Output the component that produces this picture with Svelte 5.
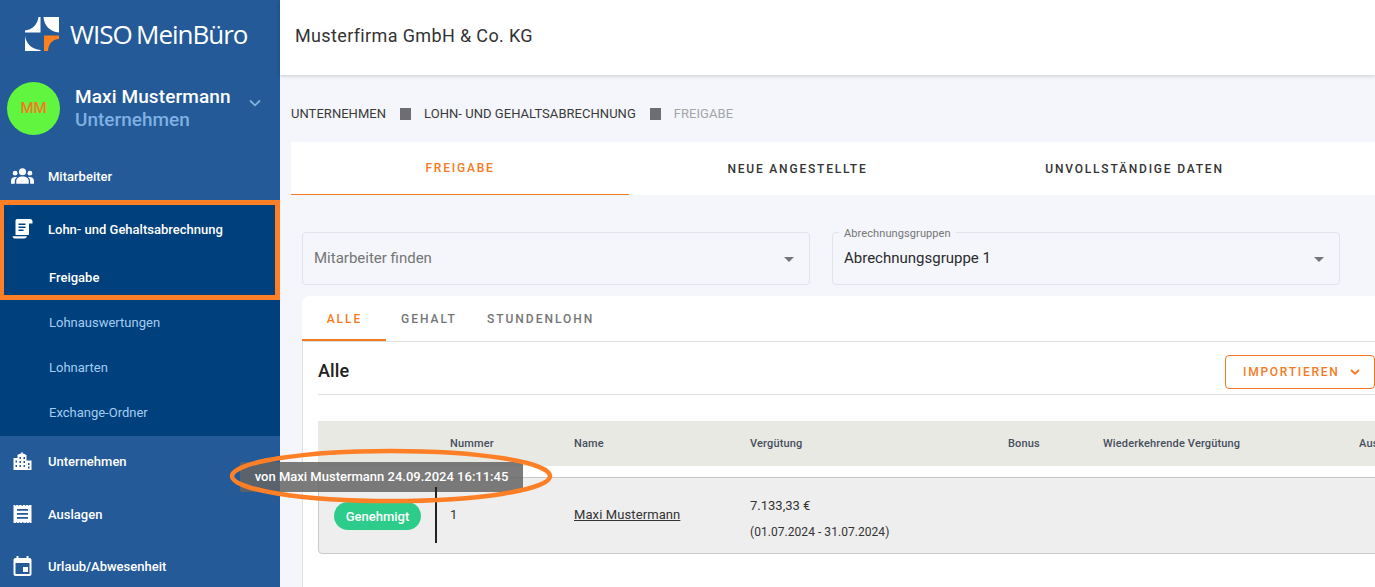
<script>
  const subItems = ['Lohnauswertungen', 'Lohnarten', 'Exchange-Ordner'];
  const mainTabs = ['Freigabe', 'Neue Angestellte', 'Unvollständige Daten'];
  const subTabs = ['Alle', 'Gehalt', 'Stundenlohn'];
</script>

<div class="app">
  <aside class="sidebar">
    <div class="brand">
      <svg class="logo" viewBox="0 0 34 34" width="34" height="34" aria-hidden="true">
        <path fill="#fff" d="M0 13.500C7 13 12.500 7.500 13.500 0H15.500V15.500H0Z" />
        <path fill="#fff" d="M18.500 0H34V15.500C25 15 19 8.500 18.500 0Z" />
        <path fill="#fff" d="M0 18.500C.5 26 7 32.500 15.500 33V34H0Z" />
        <path fill="#ff7f1e" d="M19 18.500H34V22C27 22.500 23.500 27 23 34H19Z" />
      </svg>
      <span class="brand-name">WISO MeinBüro</span>
    </div>

    <div class="profile">
      <div class="avatar">MM</div>
      <div class="who">
        <div class="who-name">Maxi Mustermann</div>
        <div class="who-role">Unternehmen</div>
      </div>
      <svg class="who-chev" viewBox="0 0 12 8" width="12" height="8" aria-hidden="true"><path d="M1 1.500 6 6.300 11 1.500" fill="none" stroke="currentColor" stroke-width="1.800" /></svg>
    </div>

    <nav>
      <div class="item">
        <svg class="ico" viewBox="0 0 24 18" aria-hidden="true"><circle cx="12" cy="4.500" r="3.700" /><circle cx="4.300" cy="6" r="2.500" /><circle cx="19.700" cy="6" r="2.500" /><path d="M5.500 17v-2.500C5.500 11 8 9.500 12 9.500s6.500 1.500 6.500 5V17Z" /><path d="M0 17v-3c0-2.500 1.800-4 4.500-4 .7 0 1.300.1 1.800.3C4.800 11.300 4 12.800 4 14.500V17ZM24 17v-3c0-2.500-1.800-4-4.500-4-.7 0-1.300.1-1.800.3 1.500 1 2.300 2.500 2.300 4.200V17Z" /></svg>
        <span>Mitarbeiter</span>
      </div>

      <div class="group">
        <div class="item nudge">
          <svg class="ico" viewBox="0 0 20 20" aria-hidden="true"><path fill-rule="evenodd" d="M4.500 0H17.500C19 0 20 1 20 2.500V4.500H16.500V14.500C16.500 15.500 16 16 15.500 16H3V2C3 .8 3.600 0 4.500 0ZM6 4.500V6H13V4.500ZM6 7.500V9H13V7.500ZM6 10.500V12H11V10.500Z" /><path d="M0 17.300H14.500C14 18.800 13 19.500 11.500 19.500H2C1 19.500 .2 18.500 0 17.300Z" /></svg>
          <span>Lohn- und Gehaltsabrechnung</span>
        </div>
        <div class="sub current">Freigabe</div>
        {#each subItems as s}
          <div class="sub">{s}</div>
        {/each}
      </div>

      <div class="item">
        <svg class="ico" viewBox="-1 -1 20 20" aria-hidden="true"><path fill-rule="evenodd" d="M8 0h1v1.200L13 3v5.500h5V18H0V6h4V2.800L8 1.200ZM6 5v2h1.500V5ZM10 5v2h1.500V5ZM2 8.500v2h1.500v-2ZM6 9v2h1.500V9ZM10 9v2h1.500V9ZM14.500 11v2H16v-2ZM2 13v2h1.500v-2ZM6 13v2h1.500v-2ZM10 13v2h1.500v-2ZM14.500 14.500v2H16v-2Z" /></svg>
        <span>Unternehmen</span>
      </div>
      <div class="item nudge">
        <svg class="ico" viewBox="-1 -1 20 20" aria-hidden="true"><path fill-rule="evenodd" d="M0 0h1.500l.75 1 .75-1h1.500l.75 1 .75-1h1.500L9 1l.75-1h1.500l.75 1 .75-1h1.500l.75 1 .75-1H18v18h-1.500l-.75-1-.75 1h-1.500l-.75-1-.75 1h-1.500L9 17l-.75 1h-1.500L6 17l-.75 1h-1.500L3 17l-.75 1H0ZM3.500 4v1.800h11V4ZM3.500 8v1.800h11V8ZM3.500 12v1.800h11V12Z" /></svg>
        <span>Auslagen</span>
      </div>
      <div class="item">
        <svg class="ico" viewBox="0 0 18 20" aria-hidden="true"><path fill-rule="evenodd" d="M3 0h2v2h8V0h2v2h1c1.100 0 2 .9 2 2v14c0 1.100-.9 2-2 2H2c-1.100 0-2-.9-2-2V4c0-1.100.9-2 2-2h1ZM2 7v11h14V7ZM9.500 11h5v5h-5Z" /></svg>
        <span>Urlaub/Abwesenheit</span>
      </div>
    </nav>
  </aside>

  <main class="main">
    <header class="topbar">Musterfirma GmbH &amp; Co. KG</header>

    <div class="crumbs">
      <span>Unternehmen</span><i></i>
      <span>Lohn- und Gehaltsabrechnung</span><i></i>
      <span class="muted">Freigabe</span>
    </div>

    <div class="main-tabs">
      {#each mainTabs as t, i}
        <div class="main-tab" class:on={i === 0}>{t}</div>
      {/each}
    </div>

    <div class="filters">
      <div class="field">
        <span class="placeholder">Mitarbeiter finden</span>
        <b class="caret"></b>
      </div>
      <div class="field">
        <span class="legend">Abrechnungsgruppen</span>
        <span class="value">Abrechnungsgruppe 1</span>
        <b class="caret"></b>
      </div>
    </div>

    <section class="card">
      <div class="sub-tabs">
        {#each subTabs as t, i}
          <div class="sub-tab" class:on={i === 0}>{t}</div>
        {/each}
      </div>

      <div class="panel">
        <div class="panel-head">
          <h2>Alle</h2>
          <button type="button" class="import">
            Importieren
            <svg viewBox="0 0 10 6" width="10" height="6" aria-hidden="true"><path d="M1 1 5 4.700 9 1" fill="none" stroke="currentColor" stroke-width="1.800" /></svg>
          </button>
        </div>

        <div class="grid thead">
          <span></span><span>Nummer</span><span>Name</span><span>Vergütung</span><span>Bonus</span><span>Wiederkehrende Vergütung</span><span>Auslagen</span>
        </div>

        <div class="grid row">
          <span class="status"><span class="chip">Genehmigt</span></span>
          <span>1</span>
          <span class="link">Maxi Mustermann</span>
          <span class="pay">
            <span>7.133,33 €</span>
            <small>(01.07.2024 - 31.07.2024)</small>
          </span>
        </div>
      </div>
    </section>
  </main>

  <div class="tooltip">von Maxi Mustermann 24.09.2024 16:11:45</div>
  <div class="note-line"></div>
  <div class="note-box"></div>
  <svg class="note-ellipse" width="330" height="60" viewBox="0 0 330 60" aria-hidden="true">
    <ellipse cx="165" cy="30" rx="159" ry="25" fill="none" stroke="#ff7f27" stroke-width="4.500" />
  </svg>
</div>

<style>
  :global(body) { margin: 0; }

  .app {
    position: relative;
    display: flex;
    width: 1375px;
    height: 587px;
    overflow: hidden;
    background: #f4f6fb;
    font-family: Roboto, "Liberation Sans", sans-serif;
    color: #212121;
  }

  .sidebar {
    flex: 0 0 280px;
    background: #235a97;
    color: #fff;
  }

  .brand {
    display: flex;
    align-items: center;
    height: 68px;
    padding-left: 25px;
    gap: 11px;
  }

  .logo { flex: none; }

  .brand-name {
    margin-top: -1px;
    font-family: "Open Sans", sans-serif;
    font-size: 26px;
    font-weight: 500;
    letter-spacing: -1px;
    white-space: nowrap;
    word-spacing: -1.500px;
  }

  .profile {
    display: flex;
    align-items: center;
    box-sizing: border-box;
    height: 82px;
    padding: 0 0 2px 7px;
  }

  .avatar {
    flex: none;
    display: grid;
    place-items: center;
    width: 53px;
    height: 53px;
    border-radius: 50%;
    background: #62f53f;
    color: #f47a22;
    font-size: 15px;
    font-weight: 500;
  }

  .who { margin-left: 15px; }
  .who-name { font-size: 19px; line-height: 23px; font-weight: 500; letter-spacing: .1px; white-space: nowrap; }
  .who-role { font-size: 19px; line-height: 23px; font-weight: 500; color: #7fb0e3; }
  .who-chev { margin-left: 18px; margin-top: -10px; color: #85b2de; }

  .item {
    display: flex;
    align-items: center;
    box-sizing: border-box;
    height: 52.500px;
    font-size: 13px;
    font-weight: 500;
    white-space: nowrap;
  }

  .item.nudge { padding-top: 1px; }

  .ico {
    flex: none;
    width: 23px;
    height: 20px;
    margin: 0 14px 0 11px;
    fill: #fff;
  }

  .group {
    background: #00407c;
    padding-bottom: 1px;
    margin-bottom: -1px;
  }

  .sub {
    display: flex;
    align-items: center;
    height: 45px;
    padding-left: 49px;
    font-size: 13px;
    color: #a5cdf2;
  }

  .sub.current { color: #fff; font-weight: 500; }

  .main {
    flex: 1;
    min-width: 0;
  }

  .topbar {
    position: relative;
    display: flex;
    align-items: center;
    box-sizing: border-box;
    height: 75px;
    padding: 0 0 4px 15px;
    background: #fff;
    box-shadow: 0 1px 4px rgba(0, 0, 0, .18);
    font-size: 18px;
    letter-spacing: .36px;
    color: #333;
  }

  .crumbs {
    display: flex;
    align-items: center;
    box-sizing: border-box;
    height: 67px;
    padding: 10px 0 0 11px;
    font-size: 13px;
    letter-spacing: .04px;
    text-transform: uppercase;
    color: #3a3a3a;
  }

  .crumbs i {
    width: 11px;
    height: 12px;
    margin: 1px 13px 0 14px;
    background: #6e6e72;
  }

  .crumbs .muted { color: #a5a5a8; }

  .main-tabs {
    display: flex;
    height: 53px;
    margin-left: 11px;
    background: #fff;
  }

  .main-tab {
    display: grid;
    place-items: center;
    box-sizing: border-box;
    width: 337px;
    padding-top: 1px;
    font-size: 12px;
    font-weight: 500;
    letter-spacing: 1.800px;
    text-transform: uppercase;
    color: #333;
  }

  .main-tab.on {
    width: 338px;
    padding: 0 0 1px;
    color: #f47a22;
    border-bottom: 1px solid #f47a22;
  }

  .filters {
    display: flex;
    gap: 22px;
    margin: 37px 0 11px 22px;
  }

  .field {
    position: relative;
    display: flex;
    align-items: center;
    box-sizing: border-box;
    width: 508px;
    height: 53px;
    padding: 0 0 2px 11px;
    border: 1px solid #dfe3ea;
    border-radius: 4px;
    font-size: 15px;
  }

  .placeholder { color: #757575; }
  .value { color: #2b2b2b; }

  .legend {
    position: absolute;
    top: -5px;
    left: 6px;
    padding: 0 5px;
    background: #f4f6fb;
    font-size: 11px;
    letter-spacing: .1px;
    line-height: 12px;
    color: #757575;
  }

  .caret {
    position: absolute;
    top: 24px;
    right: 15px;
    border: 5px solid transparent;
    border-top-color: #757575;
    border-bottom: 0;
  }

  .card {
    margin-left: 22px;
    width: 1300px;
    height: 300px;
    background: #fff;
    border-radius: 8px 0 0 0;
  }

  .sub-tabs {
    display: flex;
    height: 45px;
    border-bottom: 1px solid #e0e0e0;
  }

  .sub-tab {
    display: grid;
    place-items: center;
    box-sizing: border-box;
    padding: 1px 15px 0;
    font-size: 12px;
    font-weight: 500;
    letter-spacing: 2px;
    text-transform: uppercase;
    color: #757575;
  }

  .sub-tab.on {
    width: 84px;
    height: 45px;
    padding: 2px 0 0 1px;
    color: #f47a22;
    border-bottom: 2px solid #f47a22;
  }

  .panel {
    height: 300px;
    border-left: 1px solid #e0e0e0;
    padding-left: 15px;
  }

  .panel-head {
    display: flex;
    align-items: center;
    justify-content: space-between;
    width: 1268px;
    height: 49px;
    padding-top: 3px;
    margin-bottom: 26px;
    border-bottom: 1px solid #e0e0e0;
  }

  h2 {
    margin: 0;
    padding-top: 2px;
    font-size: 18px;
    font-weight: 500;
    letter-spacing: .1px;
  }

  .import {
    display: flex;
    align-items: center;
    gap: 10px;
    box-sizing: border-box;
    width: 150px;
    height: 34px;
    margin: 4px 211px 0 0;
    padding: 1px 0 0 17px;
    background: #fff;
    border: 1px solid #f47a22;
    border-radius: 4px;
    color: #f47a22;
    font: 500 12px Roboto, sans-serif;
    letter-spacing: 1.750px;
    text-transform: uppercase;
  }

  .grid {
    display: grid;
    grid-template-columns: 132px 124px 176px 258px 95px 256px 100px;
    width: 1280px;
    align-items: center;
    white-space: nowrap;
  }

  .thead {
    height: 45px;
    background: #e9e9e3;
    font-size: 11px;
    font-weight: 500;
    letter-spacing: .15px;
    color: #474e5e;
  }

  .row {
    box-sizing: border-box;
    height: 77px;
    padding-bottom: 3px;
    margin-top: 11px;
    background: #eeeeee;
    border: 1px solid #c9c9c9;
    border-radius: 4px;
    font-size: 13px;
    color: #333;
  }

  .status { padding-left: 15px; }

  .chip {
    display: inline-grid;
    place-items: center;
    width: 87px;
    height: 28px;
    margin-top: 4px;
    border-radius: 15px;
    background: #2ecc8a;
    color: #fff;
    font-weight: 500;
  }

  .grid.row > span:nth-child(2) { margin-left: -1px; }
  .grid.row > span:nth-child(3) { margin-left: -1px; }

  .link {
    text-decoration: underline;
    letter-spacing: .1px;
  }

  .pay {
    display: flex;
    flex-direction: column;
    gap: 12px;
    margin-left: -1px;
    padding-top: 9px;
    font-size: 13px;
    line-height: 15px;
  }

  .pay small { font-size: 12px; letter-spacing: .05px; }

  .tooltip {
    position: absolute;
    left: 240px;
    top: 462px;
    display: grid;
    place-items: center;
    box-sizing: border-box;
    width: 283px;
    height: 30px;
    padding-bottom: 1px;
    border-radius: 2px 0 0 2px;
    background: rgba(100, 100, 100, .85);
    color: #fff;
    font-size: 13px;
    font-weight: 500;
    white-space: nowrap;
  }

  .note-line {
    position: absolute;
    left: 435px;
    top: 487px;
    width: 2px;
    height: 56px;
    background: #222;
  }

  .note-box {
    position: absolute;
    left: 0;
    top: 200px;
    box-sizing: border-box;
    width: 280px;
    height: 100px;
    border: 5px solid #ff7f27;
    border-left-width: 4px;
  }

  .note-ellipse {
    position: absolute;
    left: 225.500px;
    top: 446px;
  }
</style>
